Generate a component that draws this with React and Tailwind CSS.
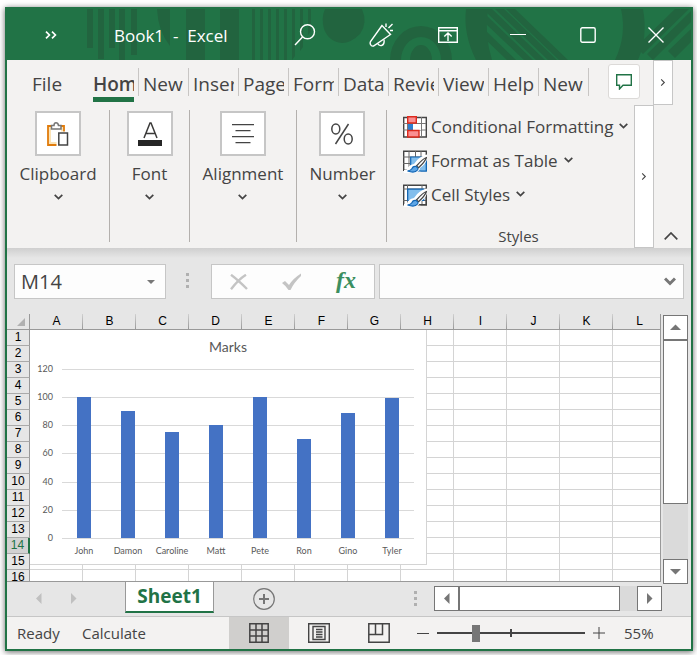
import React from 'react';

const TABS = ['New', 'Insert', 'Page', 'Formulas', 'Data', 'Review', 'View', 'Help', 'New'];
const COLUMNS = ['A', 'B', 'C', 'D', 'E', 'F', 'G', 'H', 'I', 'J', 'K', 'L'];
const ROWS = Array.from({ length: 16 }, (_, i) => i + 1);
const ACTIVE_ROW = 14;

const MARKS = [
  { name: 'John', value: 100 },
  { name: 'Damon', value: 90 },
  { name: 'Caroline', value: 75 },
  { name: 'Matt', value: 80 },
  { name: 'Pete', value: 100 },
  { name: 'Ron', value: 70 },
  { name: 'Gino', value: 89 },
  { name: 'Tyler', value: 99 },
];

function Chevron({ className = 'w-[9px] h-[6px]', strokeWidth = 1.7 }) {
  return (
    <svg viewBox="0 0 9 6" className={className} fill="none" stroke="currentColor" strokeWidth={strokeWidth}>
      <path d="M0.7 0.8 4.5 4.6 8.3 0.8" />
    </svg>
  );
}

function Triangle({ dir }) {
  const paths = {
    up: 'M0 8 5.5 2.5 11 8Z',
    down: 'M0 3 5.5 8.5 11 3Z',
    left: 'M8.5 0 3 5.5 8.5 11Z',
    right: 'M3 0 8.5 5.5 3 11Z',
  };
  return (
    <svg viewBox="0 0 11 11" className="w-[11px] h-[11px]" fill="currentColor">
      <path d={paths[dir]} />
    </svg>
  );
}

function Dots() {
  return (
    <div className="flex flex-col gap-[3px]">
      <i className="w-[3px] h-[3px] bg-[#b0b0b0]" />
      <i className="w-[3px] h-[3px] bg-[#b0b0b0]" />
      <i className="w-[3px] h-[3px] bg-[#b0b0b0]" />
    </div>
  );
}

function TitlePattern() {
  return (
    <svg
      viewBox="0 0 684 51"
      preserveAspectRatio="xMinYMin slice"
      className="absolute inset-0 w-full h-full"
      fill="#22643f"
    >
      <path d="M80 0h6v39h-6zM91 0h6v50h-6zM102 0h6v39h-6zM112 0h6v51h-6zM124 0h6v46h-6z" />
      <path d="M150 0h13v37Q151 22 150 0ZM179 0h19v51h-19zM213 0h19v51h-19z" />
      <path d="M245 0h3v51h-3zM253 0h3v51h-3zM261 0h3v51h-3zM269 0h3v51h-3zM277 0h3v51h-3zM285 0h3v47l-3 4zM293 0h3v38l-3 4zM301 0h3v22l-3 4z" />
      <path d="M318 0h37Q361 14 353 25Q344 34 335 34Q322 33 317 20Q314 9 318 0Z" />
      <path d="M383 51a31 34 0 0 1 62 0h-11a20 23 0 0 0-40 0zM403 51a11 15 0 0 1 22 0z" />
      <path d="M459 0h22q-4 26 4 51h-16q-13-26-10-51z" />
      <path d="M479 6l47 45h-9l-38-36zM479 22l30 29h-9l-21-20zM485 0l53 51h-9L479 3V0zM497 0l53 51h-9L488 0zM508 0l53 51h-9L499 0z" />
      <path d="M614 0h22q5 28-5 51h-23q12-25 6-51z" />
      <path d="M668 0h14l-46 45-7-7zM684 2v11l-38 38-6-6zM684 20v13l-16 16-7-7z" />
    </svg>
  );
}

function TitleBar() {
  return (
    <header className="relative h-[51px] shrink-0 bg-[#217346] text-white">
      <TitlePattern />
      <div className="relative flex h-full items-center">
        <button aria-label="More commands" className="flex w-[87px] justify-center">
          <svg viewBox="0 0 12 8" className="w-3 h-2" fill="none" stroke="currentColor" strokeWidth="1.7">
            <path d="M1 .7 4.4 4 1 7.3M7 .7 10.4 4 7 7.3" />
          </svg>
        </button>
        <h1 className="flex-1 whitespace-pre pl-5 pt-0.5 text-[17px]">Book1  -  Excel</h1>
        <button aria-label="Search" className="flex w-[76px] justify-center">
          <svg viewBox="0 0 22 22" className="w-[22px] h-[22px]" fill="none" stroke="currentColor" strokeWidth="1.4">
            <circle cx="13.5" cy="7.8" r="7" />
            <path d="M8.5 13 1 21" />
          </svg>
        </button>
        <button aria-label="Coming soon" className="flex w-[76px] justify-center">
          <svg viewBox="0 0 24 24" className="w-6 h-6" fill="none" stroke="currentColor" strokeWidth="1.4">
            <path d="M13 2.5 1.5 18.5Q.8 20 1.5 21.5Q2.5 23.6 4.5 23L21.5 11.5Z" />
            <path d="M8.5 20.5Q10 23 12.5 22.5Q15.800 21.500 15 16.500" />
            <path d="M17 .5v3.500M19.500 5 23.500 1M21 7.500h3" />
          </svg>
        </button>
        <button aria-label="Ribbon display options" className="flex w-[58px] justify-center">
          <svg viewBox="0 0 20 16" className="w-5 h-4" fill="none" stroke="currentColor" strokeWidth="1.4">
            <path d="M.7.700h18.600v14.500H.700zM.700 3.700h18.600M10 14V6.500M6.300 9.500 10 6l3.700 3.500" />
          </svg>
        </button>
        <button aria-label="Minimize" className="flex w-[82px] justify-center">
          <i className="h-px w-4 bg-white" />
        </button>
        <button aria-label="Maximize" className="flex w-[58px] justify-center">
          <svg viewBox="0 0 16 16" className="w-4 h-4" fill="none" stroke="currentColor" strokeWidth="1.4">
            <rect x=".8" y=".8" width="14.4" height="14.4" rx="1.5" />
          </svg>
        </button>
        <button aria-label="Close" className="flex w-[74px] justify-center pl-1">
          <svg viewBox="0 0 16 16" className="w-4 h-4" fill="none" stroke="currentColor" strokeWidth="1.4">
            <path d="M.5.5l15 15M15.500.5l-15 15" />
          </svg>
        </button>
      </div>
    </header>
  );
}

function ClipboardIcon() {
  return (
    <svg viewBox="0 0 22 24" className="w-[22px] h-6">
      <path d="M1 4h16v19H1z" fill="#fbe3b6" stroke="#e07b0c" strokeWidth="1.8" />
      <path d="M4 4.500h10v15.500H4z" fill="#fff" />
      <path d="M4.500 7V3.500H7Q7 .8 9 .8T11.500 3.500h2.500V7z" fill="#fff" stroke="#767676" strokeWidth="1.5" />
      <path d="M9.500 9.500H22V24H9.500z" fill="#fff" />
      <path d="M11.800 11h8.700v12h-8.700z" fill="#fff" stroke="#444" strokeWidth="1.5" />
    </svg>
  );
}

function FontIcon() {
  return (
    <svg viewBox="0 0 24 24" className="w-6 h-6">
      <path d="M6 16 12 1h1l6 15M8 11.500h9" fill="none" stroke="#3b3a39" strokeWidth="1.5" />
      <path d="M0 18h24v6H0z" fill="#262626" />
    </svg>
  );
}

function AlignIcon() {
  return (
    <svg viewBox="0 0 22 20" className="w-[22px] h-5" stroke="#444" strokeWidth="1.3">
      <path d="M0 .7h22M3.500 6.700h15M0 12.700h22M3.500 18.700h15" />
    </svg>
  );
}

function PercentIcon() {
  return (
    <svg viewBox="0 0 22 22" className="w-[22px] h-[22px]" fill="none" stroke="#444" strokeWidth="1.5">
      <ellipse cx="4.800" cy="6" rx="4" ry="5" />
      <ellipse cx="17.200" cy="16" rx="4" ry="5" />
      <path d="M17.500 1 4.500 21" />
    </svg>
  );
}

function CondFormatIcon() {
  return (
    <svg viewBox="0 0 24 22" className="w-6 h-[22px]" fill="none">
      <path d="M.7 1.500h22.600v19.500H.7z" fill="#fff" stroke="#444" strokeWidth="1.4" />
      <path d="M4.500 1v20M18.500 1v20M0 7.500h23M0 14h23" stroke="#777" />
      <path d="M5 8h5v6H5z" fill="#2e7fd0" />
      <path d="M10 8h8v6h-8z" fill="#fff" />
      <path d="M4.700.7h8.600v6.300H4.700zM4.700 14.500h11.300V21H4.700z" fill="#f98f92" stroke="#dc2a1d" strokeWidth="1.4" />
    </svg>
  );
}

function Brush() {
  return (
    <>
      <path d="M24 4.500Q16 6 11 14 5 15 4 19.500L1 20v3h11q5-2 5-5 6-4 7-9z" fill="#fff" />
      <path d="M23.500 7.500Q20 8.500 13.500 16l2 1.700Q22 12 23.500 7.500Z" fill="#fff" stroke="#444" strokeWidth="1.3" />
      <path d="M13 16.500Q10 16 9 18.500 8 20.500 4.500 21 12 23.500 14.500 20 15.800 18 13 16.500Z" fill="#5ea6e6" stroke="#0f64b4" strokeWidth="1.2" />
    </>
  );
}

function TableFormatIcon() {
  return (
    <svg viewBox="0 0 24 23" className="w-6 h-[23px]" fill="none">
      <path d="M.7 1.200h22.600v19H.7z" fill="#fff" stroke="#444" strokeWidth="1.4" />
      <path d="M6 1v19M12.500 1v6M18 1v6M0 7h23M0 13.500h7" stroke="#666" />
      <path d="M7.700 7h15.600v14H7.700z" fill="#83beec" stroke="#0f64b4" strokeWidth="1.2" />
      <Brush />
      <path d="M17.500 21h5.800v-8" fill="#83beec" stroke="#0f64b4" strokeWidth="1.2" />
    </svg>
  );
}

function CellStylesIcon() {
  return (
    <svg viewBox="0 0 24 23" className="w-6 h-[23px]" fill="none">
      <path d="M.7 1.200h22.600v19.500H.7z" fill="#fff" stroke="#444" strokeWidth="1.4" />
      <path d="M4.500 1v20M19 1v20M0 5h23M0 16.500h23" stroke="#666" />
      <path d="M4.700 5.200h16V16.500h-16z" fill="#83beec" stroke="#0f64b4" strokeWidth="1.2" />
      <Brush />
      <path d="M17.500 20.700h5.800v-8" stroke="#444" strokeWidth="1.4" />
    </svg>
  );
}

function RibbonGroup({ label, width, children }) {
  return (
    <div className={`flex h-[132px] shrink-0 flex-col items-center border-r border-[#b3b0ad] pt-px ${width}`}>
      <button className="flex flex-col items-center">
        <span className="flex h-[45px] w-[46px] items-center justify-center border-2 border-[#c6c6c6] bg-white">
          {children}
        </span>
        <span className="mt-1.5 text-[17px] leading-6">{label}</span>
        <Chevron className="mt-2 w-[9px] h-[6px]" />
      </button>
    </div>
  );
}

function StyleCommand({ label, children }) {
  return (
    <button className="flex h-[34px] items-center gap-1 whitespace-nowrap">
      {children}
      <span className="text-[17px]">{label}</span>
      <Chevron className="ml-0.5 mb-0.5 w-[9px] h-[6px]" />
    </button>
  );
}

function Ribbon() {
  return (
    <section className="flex h-[188px] shrink-0 flex-col bg-[#f3f2f1] text-[#444]">
      <div className="flex h-[45px]">
        <nav className="flex flex-1 pt-2">
          <a href="#file" className="w-[86px] pl-[25px] text-[19px] leading-[33px]">File</a>
          <a href="#home" aria-current="page" className="h-7 w-[46px] border-r border-[#c8c6c4] pr-1 text-[19px] font-semibold leading-[33px]">
            <span className="block h-[34px] overflow-hidden border-b-[5px] border-[#217346]">Home</span>
          </a>
          {TABS.map((tab, i) => (
            <a key={i} href={`#tab-${i}`} className="h-7 w-[50px] border-r border-[#c8c6c4] pl-1 pr-1 text-[19px] leading-[33px]">
              <span className="block overflow-hidden whitespace-nowrap">{tab}</span>
            </a>
          ))}
        </nav>
        <div className="flex pr-[18px]">
          <button aria-label="Comments" className="mr-[13px] mt-1 flex h-[35px] w-8 items-center justify-center rounded-[3px] border border-[#dcdad8] bg-white">
            <svg viewBox="0 0 16 16" className="w-4 h-4" fill="none" stroke="#217346" strokeWidth="1.4">
              <path d="M.7.700h14.600v10.600H7L3.500 15v-3.700H.700z" />
            </svg>
          </button>
          <button aria-label="More tabs" className="flex h-[45px] w-5 items-center justify-center border border-[#c6c6c6] bg-white">
            <Chevron className="-rotate-90 w-2 h-[5px]" strokeWidth={1.3} />
          </button>
        </div>
      </div>
      <div className="flex flex-1">
        <div className="flex flex-1 pt-[5px]">
          <RibbonGroup label="Clipboard" width="w-[103px]"><ClipboardIcon /></RibbonGroup>
          <RibbonGroup label="Font" width="w-20"><FontIcon /></RibbonGroup>
          <RibbonGroup label="Alignment" width="w-[107px]"><AlignIcon /></RibbonGroup>
          <RibbonGroup label="Number" width="w-[90px] pl-0.5"><PercentIcon /></RibbonGroup>
          <div className="flex flex-1 flex-col pl-4">
            <StyleCommand label="Conditional Formatting"><CondFormatIcon /></StyleCommand>
            <StyleCommand label="Format as Table"><TableFormatIcon /></StyleCommand>
            <StyleCommand label="Cell Styles"><CellStylesIcon /></StyleCommand>
            <span className="mt-3 text-center text-[15px] leading-6">Styles</span>
          </div>
        </div>
        <button aria-label="Scroll ribbon" className="flex w-5 items-center justify-center border border-[#c6c6c6] bg-white">
          <Chevron className="-rotate-90 w-2 h-[5px]" strokeWidth={1.3} />
        </button>
        <div className="flex w-[37px] items-end justify-center pb-1.5 pr-1">
          <button aria-label="Collapse the ribbon">
            <svg viewBox="0 0 14 8" className="mb-0.5 w-3.5 h-2" fill="none" stroke="currentColor" strokeWidth="1.7">
              <path d="M.7 7.300 7 1l6.300 6.300" />
            </svg>
          </button>
        </div>
      </div>
    </section>
  );
}

function FormulaBar() {
  return (
    <section className="h-[66px] shrink-0 bg-[linear-gradient(#cfcfcf,#e6e6e6_10px)] px-[7px] pt-4">
      <div className="flex h-[35px]">
        <div className="flex w-[152px] items-center border border-[#c6c6c6] bg-[#fdfdfd] pr-2.5">
          <input aria-label="Name box" defaultValue="M14" className="w-full min-w-0 pl-1.5 text-[20px] leading-7 text-[#444] outline-none" />
          <button aria-label="Names" className="text-[#777]">
            <svg viewBox="0 0 8 4" className="w-2 h-1" fill="currentColor"><path d="M0 0h8L4 4z" /></svg>
          </button>
        </div>
        <div className="flex w-[45px] items-center justify-center pb-0.5 pr-0.5"><Dots /></div>
        <div className="flex w-[164px] items-center justify-between border border-[#c6c6c6] bg-[#fdfdfd] px-[18px]">
          <button aria-label="Cancel">
            <svg viewBox="0 0 18 16" className="w-[18px] h-4" stroke="#c4c4c4" strokeWidth="2.4" fill="none">
              <path d="M1 .8Q8 6 17 15M16 .8Q9 5 1 15.200" />
            </svg>
          </button>
          <button aria-label="Enter">
            <svg viewBox="0 0 20 18" className="w-5 h-[18px]" fill="#c4c4c4">
              <path d="M0 10 3 8 7 12Q11 5.500 19 .5V3Q12 9.500 8.500 17H6.500Q4 13 0 10Z" />
            </svg>
          </button>
          <button aria-label="Insert function" className="pb-1 font-['Liberation_Serif',serif] text-[24px] font-bold italic leading-6 text-[#3c8f60]">
            fx
          </button>
        </div>
        <div className="ml-1 flex flex-1 items-center border border-[#c6c6c6] bg-[#fdfdfd] pr-[7px]">
          <input aria-label="Formula bar" className="w-full min-w-0 px-2 text-[17px] outline-none" />
          <button aria-label="Expand formula bar" className="text-[#777]">
            <svg viewBox="0 0 12 9" className="w-3 h-[9px]" fill="none" stroke="currentColor" strokeWidth="3">
              <path d="M1 1.500 6 6.500 11 1.500" />
            </svg>
          </button>
        </div>
      </div>
    </section>
  );
}

function MarksChart() {
  const baseline = 208;
  const scale = 1.41;
  const ticks = [0, 20, 40, 60, 80, 100, 120];
  return (
    <svg
      viewBox="0 0 396 234"
      className="absolute left-[23px] top-4 h-[235px] w-[397px] border-b border-r border-[#d4d4d4] bg-white font-['Lato','Open_Sans',sans-serif]"
      fill="#595959"
    >
      <text x="198" y="22" textAnchor="middle" fontSize="14">Marks</text>
      {ticks.map((t) => {
        const y = Math.round(baseline - t * scale);
        return (
          <g key={t}>
            <path d={`M32 ${y + 0.5}H384`} stroke="#d9d9d9" />
            <text x="23" y={y + 3} textAnchor="end" fontSize="9">{t}</text>
          </g>
        );
      })}
      {MARKS.map((m, i) => {
        const h = Math.round(m.value * scale);
        return (
          <g key={m.name}>
            <rect x={47 + i * 44} y={baseline - h} width="14" height={h} fill="#4472c4" />
            <text x={54 + i * 44} y="224" textAnchor="middle" fontSize="9">{m.name}</text>
          </g>
        );
      })}
    </svg>
  );
}

function Sheet() {
  return (
    <div className="relative min-h-0 flex-1 overflow-hidden border-b border-r border-[#999] bg-white">
      <table className="w-full table-fixed border-separate border-spacing-0 font-['Liberation_Sans',Arial,sans-serif] text-black">
        <thead>
          <tr className="h-4 bg-[#e6e6e6]">
            <th className="w-[23px] border-b border-r border-[#999] p-0">
              <svg viewBox="0 0 8 8" className="ml-auto mr-1 w-2 h-2" fill="#b1b1b1"><path d="M8 0v8H0z" /></svg>
            </th>
            {COLUMNS.map((c) => (
              <th
                key={c}
                scope="col"
                className={`h-4 border-b border-[#999] text-[12px] font-normal leading-[15px] ${
                  c === 'L'
                    ? 'py-0 pl-1.5 pr-0'
                    : 'w-[53px] bg-[linear-gradient(#d0d0d0,#999)] bg-[length:1px_100%] bg-right bg-no-repeat p-0'
                }`}
              >
                {c}
              </th>
            ))}
          </tr>
        </thead>
        <tbody>
          {ROWS.map((r) => (
            <tr key={r} className="h-4">
              <th
                scope="row"
                className={`h-4 border-b p-0 text-[12px] font-normal leading-[15px] ${
                  r === ACTIVE_ROW
                    ? 'border-b-[#aaa] border-r-2 border-r-[#217346] bg-[#d2d2d2] text-[#217346]'
                    : 'border-b-[#aaa] border-r border-r-[#999] bg-[#e6e6e6]'
                }`}
              >
                {r}
              </th>
              {COLUMNS.map((c) => (
                <td key={c} className={`border-b border-[#d4d4d4] p-0 ${c === 'L' ? '' : 'border-r'}`} />
              ))}
            </tr>
          ))}
        </tbody>
      </table>
      <MarksChart />
    </div>
  );
}

function VerticalScroll() {
  return (
    <div className="ml-0.5 mr-[3px] mt-px -mb-0.5 flex w-[25px] flex-col bg-[#dadada] text-[#767676]">
      <button aria-label="Scroll up" className="flex h-[25px] items-center justify-center border border-[#767676] bg-white">
        <Triangle dir="up" />
      </button>
      <div className="h-[164px] border border-[#767676] bg-white" />
      <button aria-label="Scroll down" className="mt-auto flex h-[25px] items-center justify-center border border-[#767676] bg-white">
        <Triangle dir="down" />
      </button>
    </div>
  );
}

function SheetBar() {
  return (
    <section className="flex h-[35px] shrink-0 border-b border-[#c6c6c6] bg-[#e6e6e6]">
      <div className="flex w-[118px] items-center gap-6 pb-0.5 pl-[26px] text-[#c0c0c0]">
        <button aria-label="Previous sheet"><Triangle dir="left" /></button>
        <button aria-label="Next sheet"><Triangle dir="right" /></button>
      </div>
      <button className="h-[31px] w-[89px] border-x border-b-2 border-x-[#999] border-b-[#217346] bg-white text-[19px] font-bold leading-[29px] text-[#217346]">
        Sheet1
      </button>
      <button aria-label="New sheet" className="ml-[39px] mt-1.5 self-start">
        <svg viewBox="0 0 22 22" className="w-[22px] h-[22px]" fill="none" stroke="#767676">
          <circle cx="11" cy="11" r="10.300" strokeWidth="1.2" />
          <path d="M11 6v10M6 11h10" strokeWidth="2" />
        </svg>
      </button>
      <div className="ml-auto flex items-start pr-[29px] pt-1 text-[#767676]">
        <div className="mr-[17px] mt-[5px]"><Dots /></div>
        <div className="flex h-[25px] w-[228px] bg-[#dadada]">
          <button aria-label="Scroll left" className="flex w-[25px] items-center justify-center border border-[#767676] bg-white">
            <Triangle dir="left" />
          </button>
          <div className="w-[161px] border border-[#767676] bg-white" />
          <button aria-label="Scroll right" className="ml-auto flex w-[25px] items-center justify-center border border-[#767676] bg-white">
            <Triangle dir="right" />
          </button>
        </div>
      </div>
    </section>
  );
}

function StatusBar() {
  return (
    <footer className="flex h-8 shrink-0 items-center bg-[#f3f2f1] text-[15px] text-[#444]">
      <span className="w-[75px] pl-2.5">Ready</span>
      <span>Calculate</span>
      <div className="ml-auto flex h-full items-center">
        <button aria-label="Normal view" className="flex h-full w-[60px] items-center justify-center bg-[#d0cfcd]">
          <svg viewBox="0 0 20 20" className="w-5 h-5" fill="none" stroke="#444" strokeWidth="1.5">
            <path d="M.8.800h18.400v18.400H.800zM7 1v18M13 1v18M1 7h18M1 13h18" />
          </svg>
        </button>
        <button aria-label="Page layout view" className="flex w-[60px] items-center justify-center">
          <svg viewBox="0 0 22 20" className="w-[22px] h-5" fill="none" stroke="#444" strokeWidth="1.4">
            <path d="M.7.700h20.600v18.600H.700zM5 3.500h12v13H5zM8 6.500h6.500M8 9h6.500M8 11.500h6.500M8 14h6.500" />
          </svg>
        </button>
        <button aria-label="Page break preview" className="flex w-[60px] items-center justify-center">
          <svg viewBox="0 0 22 20" className="w-[22px] h-5" fill="none" stroke="#444" strokeWidth="1.5">
            <path d="M.8.800h20.400v18.400H.800zM1 11.500h13.500V1M7.500 1v10.500" />
          </svg>
        </button>
        <button aria-label="Zoom out" className="ml-2 mr-2 flex h-5 w-3 items-center">
          <i className="h-px w-full bg-[#444]" />
        </button>
        <div className="relative flex w-[148px] items-center">
          <i className="absolute left-[73px] h-2 w-[2px] bg-[#444]" />
          <input
            type="range"
            aria-label="Zoom"
            min="0"
            max="100"
            defaultValue="25"
            className="relative h-[2px] w-full appearance-none bg-[#444] outline-none [&::-webkit-slider-thumb]:h-[17px] [&::-webkit-slider-thumb]:w-2 [&::-webkit-slider-thumb]:appearance-none [&::-webkit-slider-thumb]:bg-[#767676]"
          />
        </div>
        <button aria-label="Zoom in" className="ml-2 mr-[19px]">
          <svg viewBox="0 0 12 12" className="w-3 h-3" stroke="#444"><path d="M6 0v12M0 6h12" /></svg>
        </button>
        <span className="w-[67px]">55%</span>
      </div>
    </footer>
  );
}

export default function App() {
  return (
    <div className="flex h-screen flex-col bg-white pb-1 pl-[5px] pr-1 pt-[7px] font-['Open_Sans','Noto_Sans',sans-serif]">
      <main className="flex min-h-0 flex-1 flex-col border-2 border-[#217346] bg-[#e6e6e6] shadow-[0_1px_6px_rgba(0,0,0,0.6)]">
        <TitleBar />
        <Ribbon />
        <FormulaBar />
        <div className="relative flex min-h-0 flex-1">
          <Sheet />
          <VerticalScroll />
        </div>
        <SheetBar />
        <StatusBar />
      </main>
    </div>
  );
}
